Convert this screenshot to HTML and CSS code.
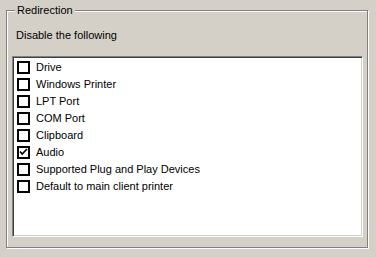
FILE: index.html
```html
<!DOCTYPE html>
<html lang="en">
<head>
    <meta charset="UTF-8">
    <title>Redirection</title>
    <link rel="stylesheet" href="styles.css">
</head>
<body>
    <div class="dialog">
        <fieldset class="group">
            <legend>Redirection</legend>
            <p class="hint">Disable the following</p>
            <ul class="checklist">
                <li><span class="box"></span>Drive</li>
                <li><span class="box"></span>Windows Printer</li>
                <li><span class="box"></span>LPT Port</li>
                <li><span class="box"></span>COM Port</li>
                <li><span class="box"></span>Clipboard</li>
                <li><span class="box checked"><svg width="9" height="9" viewBox="0 0 9 9"><polyline points="1,3.5 3.2,6 8,1" fill="none" stroke="#000" stroke-width="1.7"/></svg></span>Audio</li>
                <li><span class="box"></span>Supported Plug and Play Devices</li>
                <li><span class="box"></span>Default to main client printer</li>
            </ul>
        </fieldset>
    </div>
</body>
</html>
```

FILE: styles.css
```css
* {
    margin: 0;
    padding: 0;
    box-sizing: border-box;
}

body {
    font-family: "Liberation Sans", Arial, sans-serif;
    font-size: 11px;
    line-height: 13px;
    color: #000;
    background: #d4d0c8;
}

.dialog {
    padding: 4px 8px 8px 6px;
}

/* etched group box */
.group {
    width: 362px;
    margin: 0;
    padding: 12px 4px 10px 5px;
    border: 1px solid #808080;
    box-shadow: inset 1px 1px 0 #fff, 1px 1px 0 #fff;
    min-inline-size: 0;
}

.group legend {
    margin-left: 3px;
    padding: 0 2px;
    background: #d4d0c8;
}

.hint {
    margin-left: 4px;
    margin-bottom: 14px;
}

/* sunken list box */
.checklist {
    list-style: none;
    width: 351px;
    height: 181px;
    padding: 2px 0 0 4px;
    background: #fff;
    border: 1px solid;
    border-color: #808080 #fff #fff #808080;
    box-shadow: inset 1px 1px 0 #404040, inset -1px -1px 0 #d4d0c8;
}

.checklist li {
    display: flex;
    align-items: center;
    gap: 6px;
    height: 17px;
}

.box {
    display: flex;
    align-items: center;
    justify-content: center;
    width: 13px;
    height: 13px;
    border: 2px solid #000;
    background: #fff;
    flex-shrink: 0;
}
```
